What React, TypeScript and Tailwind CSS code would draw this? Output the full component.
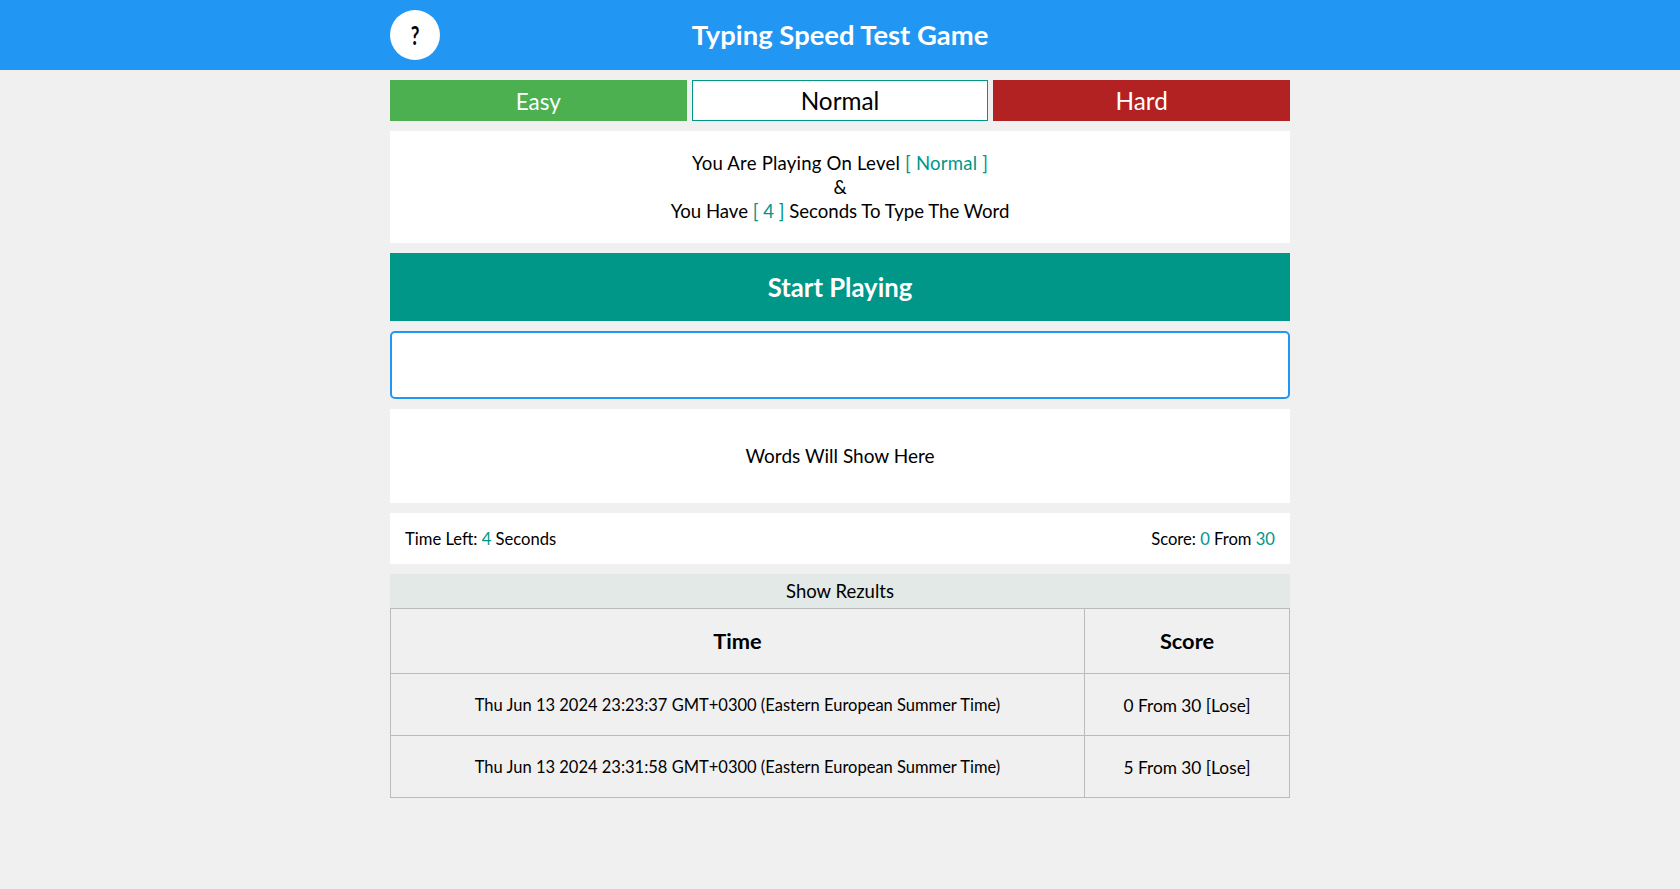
export default function App() {
  return (
    <div className="min-h-[889px] bg-[#f0f0f0] font-['Lato','Liberation_Sans',sans-serif] text-black">
      <header className="h-[70px] bg-[#2196f3]">
        <div className="relative mx-auto flex h-full w-[900px] items-center justify-center">
          <div className="absolute left-0 top-[10px] flex h-[50px] w-[50px] items-center justify-center rounded-full bg-white text-[27px] font-bold">
            <span className="inline-block scale-x-[0.7]">?</span>
          </div>
          <h1 className="text-[27.4px] font-bold text-white">Typing Speed Test Game</h1>
        </div>
      </header>
      <main className="mx-auto flex w-[900px] flex-col">
        <div className="mt-[10px] grid h-[41px] grid-cols-3 gap-[5px] text-[24.3px]">
          <div className="flex h-[41px] items-center justify-center bg-[#4caf50] pt-[2px] text-[22.5px] text-white">Easy</div>
          <div className="flex h-[41px] items-center justify-center border border-[#009688] bg-white pt-[2px]">Normal</div>
          <div className="flex h-[41px] items-center justify-center bg-[#b22222] pt-[2px] text-white">Hard</div>
        </div>
        <div className="mt-[10px] flex h-[112px] flex-col items-center justify-center bg-white text-[18.6px] leading-[24px]">
          <p className="tracking-[0.2px]">You Are Playing On Level <span className="text-[#009688]">[ Normal ]</span></p>
          <p>&amp;</p>
          <p>You Have <span className="text-[#009688]">[ 4 ]</span> Seconds To Type The Word</p>
        </div>
        <button className="mt-[10px] h-[68px] bg-[#009688] text-[25.7px] font-bold text-white">Start Playing</button>
        <input aria-label="Word" className="mt-[10px] h-[68px] rounded-[5px] border-2 border-[#2196f3] bg-white outline-none" />
        <div className="mt-[10px] flex h-[94px] items-center justify-center bg-white text-[19px]">Words Will Show Here</div>
        <div className="mt-[10px] flex h-[51px] items-center justify-between bg-white px-[15px] pt-[2px] text-[16.6px]">
          <div>Time Left: <span className="text-[#009688]">4</span> Seconds</div>
          <div>Score: <span className="text-[#009688]">0</span> From <span className="text-[#009688]">30</span></div>
        </div>
        <div className="mt-[10px] flex h-[34px] items-center justify-center bg-[#e2e9e7] pt-[2px] text-[18.5px]">Show Rezults</div>
        <table className="w-full table-fixed border-collapse border border-[#bbb] text-[16.5px]">
          <thead>
            <tr className="h-[65px] text-[21.8px]">
              <th className="w-[694px] border border-[#bbb]">Time</th>
              <th className="border border-[#bbb]">Score</th>
            </tr>
          </thead>
          <tbody>
            <tr className="h-[62px] text-center">
              <td className="border border-[#bbb] pt-[2px]">Thu Jun 13 2024 23:23:37 GMT+0300 (Eastern European Summer Time)</td>
              <td className="border border-[#bbb] pt-[2px] text-[17.3px]">0 From 30 [Lose]</td>
            </tr>
            <tr className="h-[62px] text-center">
              <td className="border border-[#bbb] pt-[2px]">Thu Jun 13 2024 23:31:58 GMT+0300 (Eastern European Summer Time)</td>
              <td className="border border-[#bbb] pt-[2px] text-[17.3px]">5 From 30 [Lose]</td>
            </tr>
          </tbody>
        </table>
      </main>
    </div>
  );
}
